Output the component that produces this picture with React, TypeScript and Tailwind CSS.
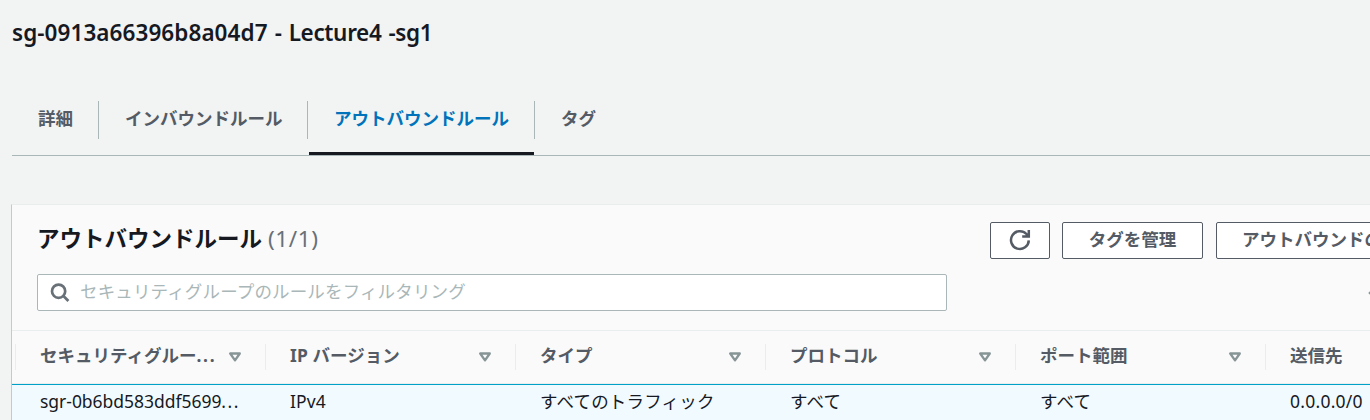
import React from 'react';

const tabs = [
  { label: '詳細', width: 'w-[87px]' },
  { label: 'インバウンドルール', width: 'w-[209px]' },
  { label: 'アウトバウンドルール', width: 'w-[227px]', active: true },
  { label: 'タグ', width: 'w-[90px]' },
];

const columns: { head: React.ReactNode; cell: React.ReactNode }[] = [
  {
    head: <>セキュリティグルー<span className="font-['Noto_Sans'] tracking-[1.7px]">...</span></>,
    cell: <><span className="tracking-[-0.03px]">sgr-0b6bd583ddf5699</span><span className="tracking-[1.5px]">...</span></>,
  },
  { head: <><span className="tracking-[0.1px]">IP </span>バージョン</>, cell: <span className="tracking-[0.1px]">IPv4</span> },
  { head: 'タイプ', cell: <span className="tracking-[0.2px]">すべてのトラフィック</span> },
  { head: 'プロトコル', cell: <span className="tracking-[0.2px]">すべて</span> },
  { head: 'ポート範囲', cell: <span className="tracking-[0.2px]">すべて</span> },
  { head: '送信先', cell: <span className="tracking-[0.25px]">0.0.0.0/0</span> },
];

function SortIcon() {
  return (
    <svg className="h-[12px] w-[14px] shrink-0" viewBox="0 0 14 12" fill="none" stroke="#879596" strokeWidth="2.3" strokeLinejoin="round">
      <path d="M2.2 2.5h9.6L7 9.4z" />
    </svg>
  );
}

function Refresh() {
  return (
    <svg className="h-[22px] w-[22px]" viewBox="0 0 22 22" fill="none" stroke="#545b64" strokeWidth="2.5">
      <path d="M19.8 11.4A8.9 8.9 0 1 1 17.4 5l1.6 1.6" />
      <path d="M19.8 1v6.5h-6.6" />
      <path d="M15.5 7.5 19.8 3.6v3.9z" fill="#545b64" stroke="none" />
    </svg>
  );
}

const buttonClass =
  'flex h-[37px] shrink-0 items-center justify-center rounded-[2px] border border-[#545b64] bg-white pb-[3px] text-[17.5px] font-bold text-[#545b64]';

export default function App() {
  return (
    <div className="h-[420px] w-[1370px] overflow-hidden whitespace-nowrap bg-[#f2f3f3] font-['Noto_Sans','Noto_Sans_CJK_JP',sans-serif] text-[#16191f]">
      <h1 className="h-[101px] pl-3 pt-[18px] text-[22.5px] leading-[30px] font-semibold tracking-[0.07px]">
        sg-0913a66396b8a04d7
        <span className="tracking-[-0.35px] [word-spacing:1.6px]"> - Lecture4 -sg1</span>
      </h1>

      <nav className="ml-3 flex h-[55px] border-b border-[#aab7b8]">
        {tabs.map((tab, i) => (
          <div key={tab.label} className={`${tab.width} flex shrink-0 flex-col justify-between`}>
            <div
              className={`flex h-[38px] items-center pb-[3px] pl-[26px] text-[17.5px] font-bold ${
                i < 3 ? 'border-r border-[#aab7b8]' : ''
              } ${tab.active ? 'text-[#0073bb]' : 'text-[#545b64]'}`}
            >
              {tab.label}
            </div>
            {tab.active && <div className="mr-px ml-px h-[3px] bg-[#16191f]" />}
          </div>
        ))}
      </nav>

      <section className="mt-12 ml-[11px] border-t border-l border-t-[#eaeded] border-l-[#c4cacb] bg-[#fafafa]">
        <header className="h-[125px] pt-[17px] pl-[25px]">
          <div className="flex h-[52px] items-start">
            <h2 className="flex w-[953px] shrink-0 items-baseline gap-[6px] text-[22.5px] leading-[34px] font-bold">
              アウトバウンドルール
              <span className="font-normal tracking-[0.6px] text-[#687078]">(1/1)</span>
            </h2>
            <button className={`${buttonClass} w-[60px]`}>
              <span className="pt-[1px]"><Refresh /></span>
            </button>
            <button className={`${buttonClass} ml-3 w-[141px]`}>タグを管理</button>
            <button className={`${buttonClass} ml-[13px] px-[25px]`}>アウトバウンドのルールを編集</button>
          </div>
          <div className="flex items-center">
            <div className="flex h-[37px] w-[910px] shrink-0 items-center rounded-[2px] border border-[#aab7b8] bg-white pl-[12px]">
              <svg className="h-5 w-5 shrink-0" viewBox="0 0 20 20" fill="none" stroke="#687078" strokeWidth="2.7">
                <circle cx="8.6" cy="8.2" r="6.6" />
                <path d="m13.2 12.8 5.2 5.2" />
              </svg>
              <span className="pb-[3px] pl-[10px] text-[17.5px] font-normal tracking-[0.15px] text-[#aab7b8]">
                セキュリティグループのルールをフィルタリング
              </span>
            </div>
            <svg className="ml-[420px] h-4 w-[10px] shrink-0" viewBox="0 0 10 16" fill="none" stroke="#879596" strokeWidth="2.5">
              <path d="M9 2 3 8l6 6" />
            </svg>
          </div>
        </header>

        <div className="flex h-[54px] border-t border-b border-[#eaeded] pt-[13px] pl-[3px]">
          {columns.map(({ head }, i) => (
            <div
              key={i}
              className="flex h-[26px] w-[250px] shrink-0 items-center justify-between border-l border-[#eaeded] pr-[23px] pl-6 text-[17.5px] font-bold text-[#545b64]"
            >
              <span className="pb-[3px]">{head}</span>
              <SortIcon />
            </div>
          ))}
        </div>
        <div className="flex h-9 items-center border-t border-[#00a1c9] bg-[#f1faff] pl-[3px] text-[17.5px]">
          {columns.map(({ cell }, i) => (
            <div key={i} className="w-[250px] shrink-0 pb-[3px] pl-[25px]">
              {cell}
            </div>
          ))}
        </div>
      </section>
    </div>
  );
}
